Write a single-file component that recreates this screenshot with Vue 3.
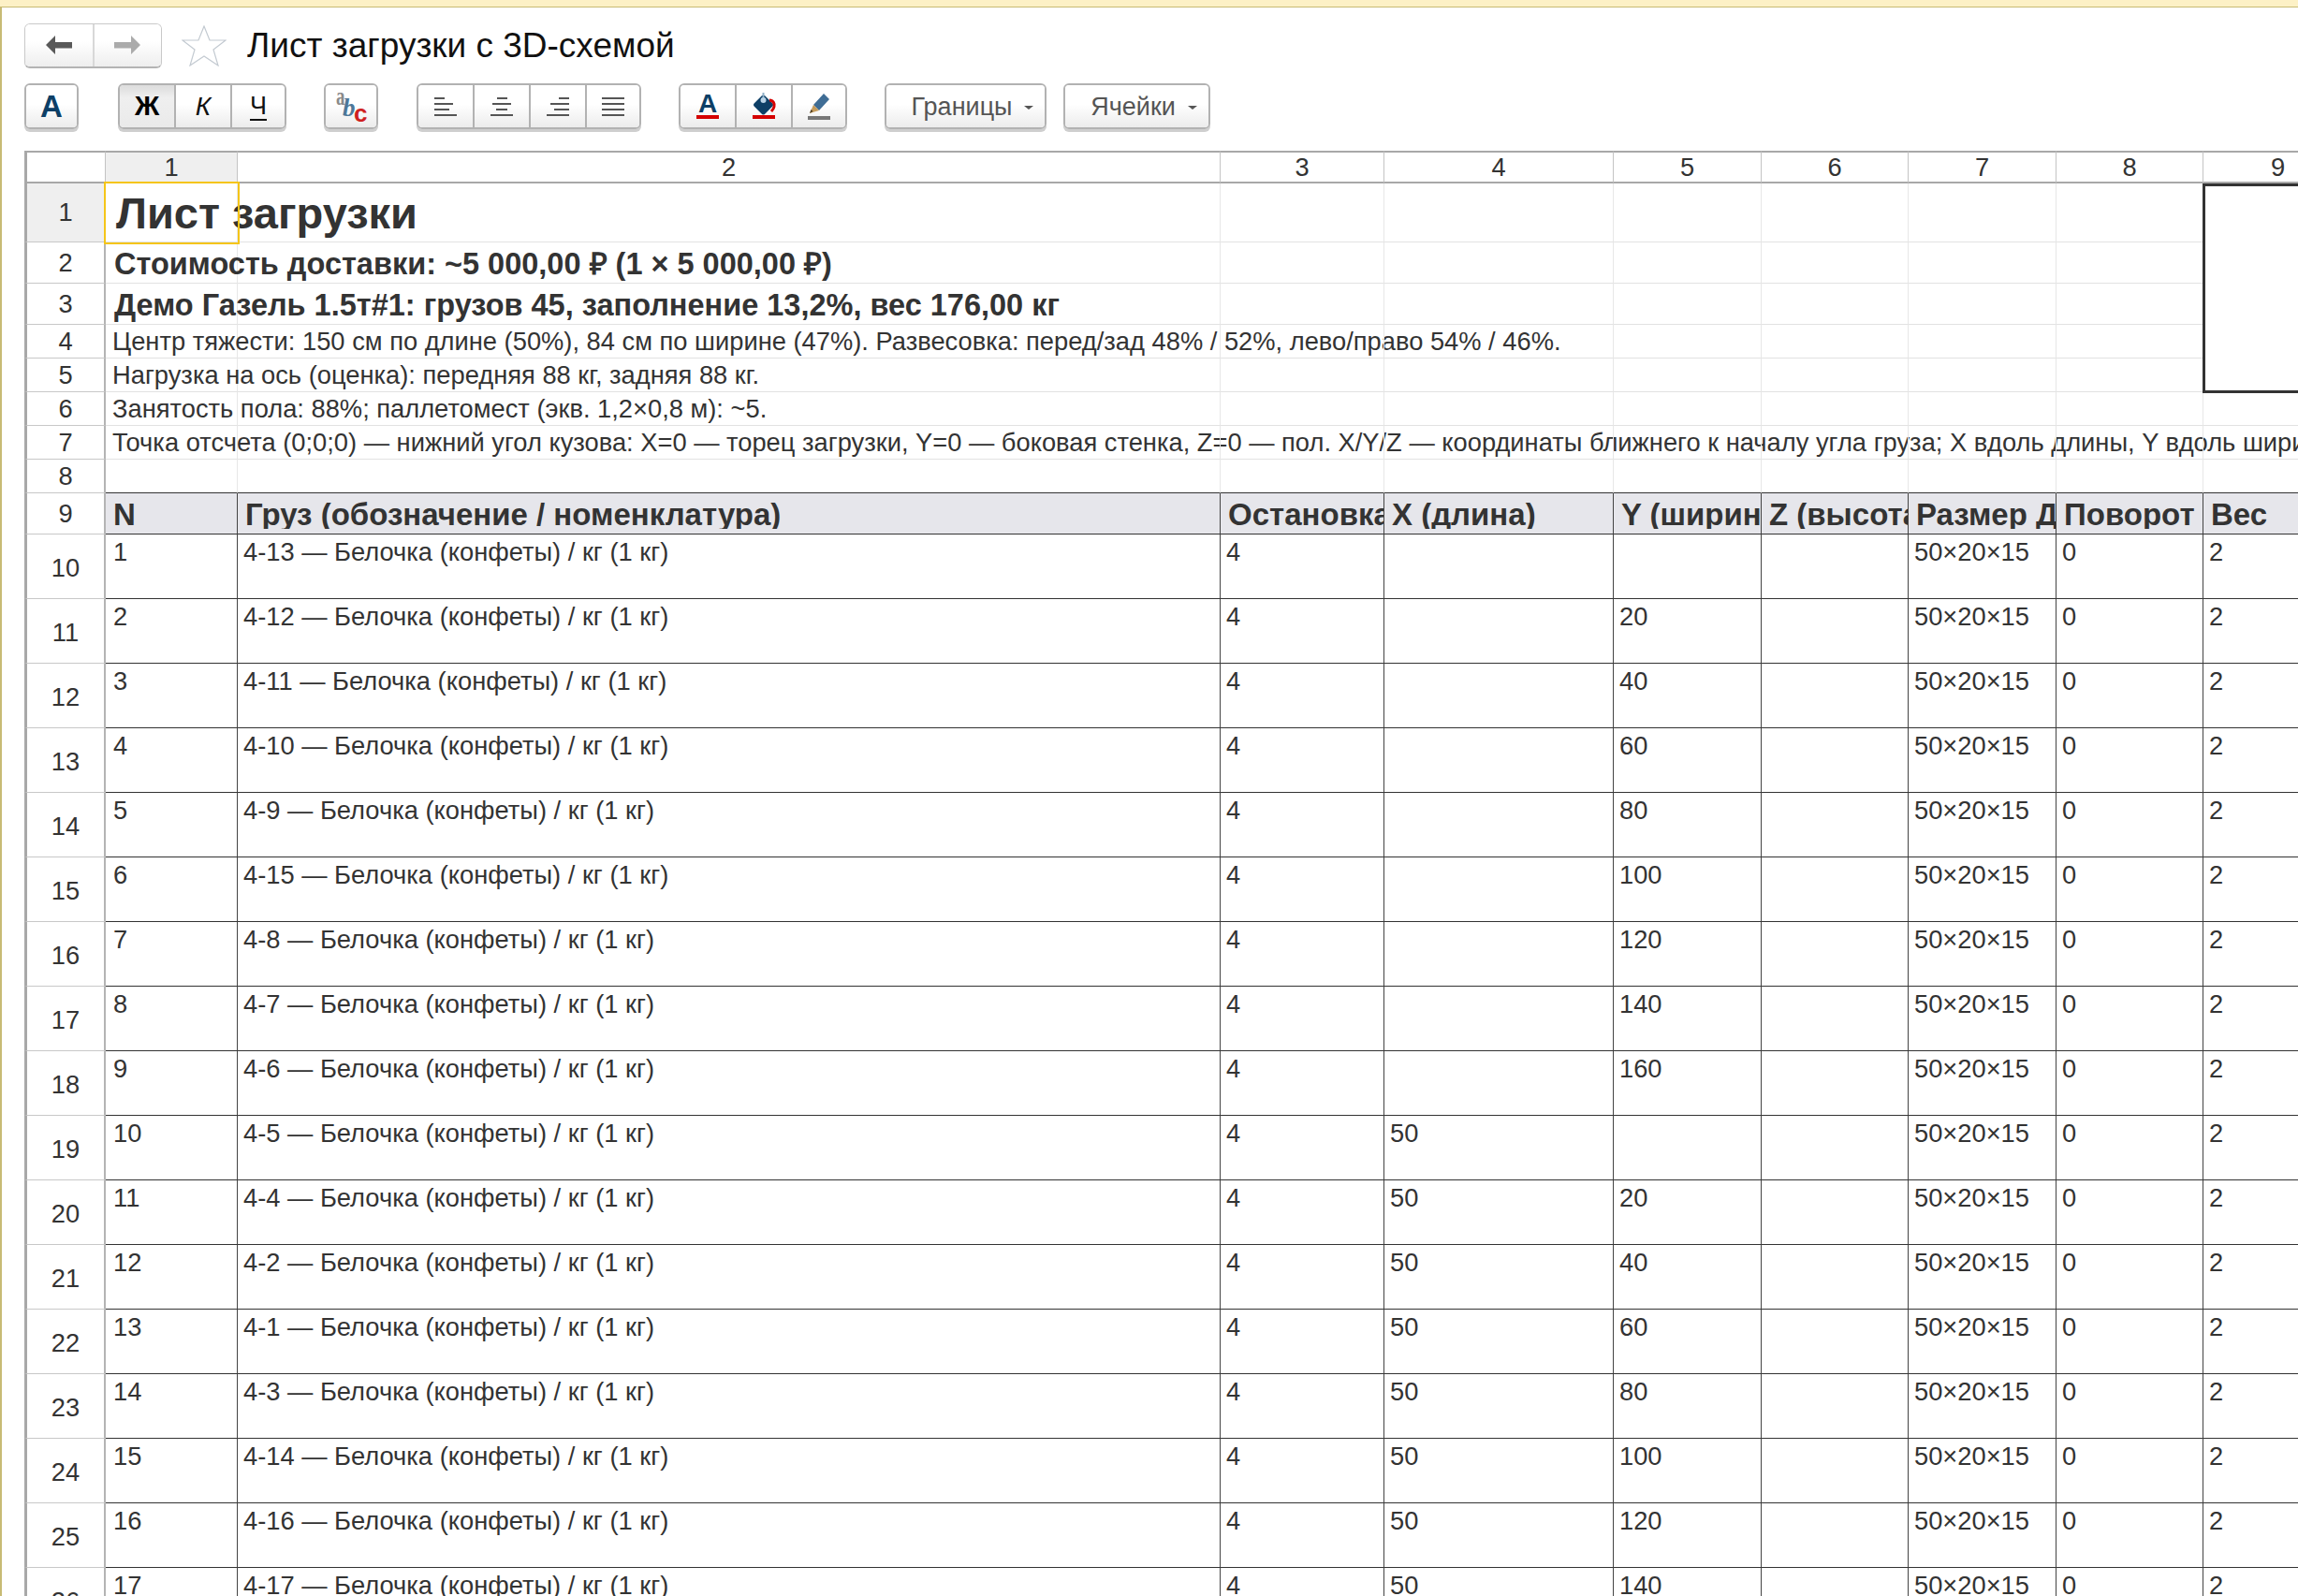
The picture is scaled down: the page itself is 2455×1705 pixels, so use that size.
<template>
  <div class="page">
    <div class="top-strip"></div>
    <div class="content">
      <div class="title-row">
        <div class="nav-group">
          <button class="nav-btn">
            <svg width="30" height="26" viewBox="0 0 30 26"><polygon points="1,13 11,3 11,10 29,10 29,16.500 11,16.500 11,23" fill="#595959" /></svg>
          </button>
          <button class="nav-btn">
            <svg width="30" height="26" viewBox="0 0 30 26"><polygon points="29,13 19,3 19,10 1,10 1,16.500 19,16.500 19,23" fill="#ababab" /></svg>
          </button>
        </div>
        <svg class="star" width="48" height="44" viewBox="0 0 48 44">
          <polygon points="24,1 30,16 47,16 34,26 39,43 24,33 9,43 14,26 1,16 18,16" fill="#fff" stroke="#c3cad1" stroke-width="1.200" />
        </svg>
        <h1 class="title">Лист загрузки с 3D-схемой</h1>
      </div>

      <div class="toolbar">
        <div class="btn-group"><button class="btn icon-btn font-a">A</button></div>
        <div class="btn-group group-b">
          <button class="btn icon-btn pressed bold-btn">Ж</button>
          <button class="btn icon-btn italic-btn">К</button>
          <button class="btn icon-btn under-btn"><span>Ч</span></button>
        </div>
        <div class="btn-group group-c">
          <button class="btn icon-btn">
            <svg width="40" height="40" viewBox="0 0 40 40">
              <text transform="translate(4 18) scale(0.7 1)" class="abc-a">a</text>
              <text x="11" y="30" class="abc-b">b</text>
              <text x="23" y="36" class="abc-c">c</text>
            </svg>
          </button>
        </div>
        <div class="btn-group group-d">
          <button v-for="(lines, i) in alignIcons" :key="i" class="btn icon-btn">
            <svg width="24" height="20" viewBox="0 0 24 20">
              <rect v-for="(l, j) in lines" :key="j" :x="l[0]" :y="j * 6" :width="l[1]" height="2" fill="#555" />
            </svg>
          </button>
        </div>
        <div class="btn-group group-e">
          <button class="btn icon-btn">
            <svg width="30" height="30" viewBox="0 0 30 30">
              <text x="15" y="21" text-anchor="middle" class="color-a">A</text>
              <rect x="3" y="24" width="24" height="4" fill="#d40000" />
            </svg>
          </button>
          <button class="btn icon-btn">
            <svg width="30" height="30" viewBox="0 0 30 30">
              <rect x="6.500" y="5" width="16" height="16" rx="2" transform="rotate(45 14.500 13)" fill="#0d3f66" />
              <path d="M21 8 C25 8 27 12 26 15 C25.500 17 25 18 23 20" fill="none" stroke="#d40000" stroke-width="3" />
              <rect x="13.500" y="0" width="2" height="7" fill="#8fb0c8" />
              <circle cx="14.500" cy="8" r="3" fill="#b9d3e6" />
              <rect x="3" y="24" width="24" height="4" fill="#d40000" />
            </svg>
          </button>
          <button class="btn icon-btn">
            <svg width="30" height="30" viewBox="0 0 30 30">
              <polygon points="9,13 20,1 26,7 15,19" fill="#3f6d95" />
              <polygon points="9,13 15,19 5,22" fill="#c69c5c" />
              <polygon points="6.500,18 8.500,20 5,22" fill="#4a3b22" />
              <rect x="3" y="25" width="24" height="4" fill="#777" />
            </svg>
          </button>
        </div>
        <div class="btn-group group-f">
          <button class="btn text-btn borders-btn">Границы<i class="caret"></i></button>
        </div>
        <div class="btn-group group-g">
          <button class="btn text-btn cells-btn">Ячейки<i class="caret"></i></button>
        </div>
      </div>

      <table class="sheet">
        <colgroup>
          <col v-for="(w, i) in colWidths" :key="i" :style="{ width: w + 'px' }" />
        </colgroup>
        <thead>
          <tr class="col-heads">
            <th class="corner"></th>
            <th v-for="n in 9" :key="n" :class="{ 'head-active': n === 1 }">{{ n }}</th>
          </tr>
        </thead>
        <tbody>
          <tr v-for="(row, i) in topRows" :key="i" :class="row.cls">
            <th class="row-head" :class="{ 'head-active': i === 0 }">{{ i + 1 }}</th>
            <td class="free first">
              <span :class="row.textCls">{{ row.text }}</span>
              <div v-if="i === 0" class="selection"></div>
            </td>
            <td v-for="n in 8" :key="n" class="free">
              <div v-if="i === 0 && n === 8" class="picture-frame"></div>
            </td>
          </tr>
          <tr class="r-head">
            <th class="row-head">9</th>
            <td v-for="h in tableHead" :key="h" class="tbl-head"><div class="clip">{{ h }}</div></td>
          </tr>
          <tr v-for="(item, i) in items" :key="item[0]" class="r-data">
            <th class="row-head">{{ i + 10 }}</th>
            <td class="num">{{ i + 1 }}</td>
            <td>{{ item[0] }} — Белочка (конфеты) / кг (1 кг)</td>
            <td>4</td>
            <td>{{ item[1] }}</td>
            <td>{{ item[2] }}</td>
            <td></td>
            <td>50×20×15</td>
            <td>0</td>
            <td>2</td>
          </tr>
        </tbody>
      </table>
    </div>
  </div>
</template>

<script setup>
const colWidths = [87, 141, 1050, 175, 245, 158, 157, 158, 157, 160];

const alignIcons = [
  [[0, 11], [0, 20], [0, 16], [0, 24]],
  [[7, 11], [2, 20], [6, 12], [0, 24]],
  [[13, 11], [4, 20], [8, 16], [0, 24]],
  [[0, 24], [0, 24], [0, 24], [0, 24]],
];

const topRows = [
  { cls: "r1", textCls: "t-title", text: "Лист загрузки" },
  { cls: "r2", textCls: "t-bold", text: "Стоимость доставки: ~5 000,00 ₽ (1 × 5 000,00 ₽)" },
  { cls: "r2", textCls: "t-bold", text: "Демо Газель 1.5т#1: грузов 45, заполнение 13,2%, вес 176,00 кг" },
  { cls: "r3", textCls: "t-plain", text: "Центр тяжести: 150 см по длине (50%), 84 см по ширине (47%). Развесовка: перед/зад 48% / 52%, лево/право 54% / 46%." },
  { cls: "r3", textCls: "t-plain", text: "Нагрузка на ось (оценка): передняя 88 кг, задняя 88 кг." },
  { cls: "r3", textCls: "t-plain", text: "Занятость пола: 88%; паллетомест (экв. 1,2×0,8 м): ~5." },
  { cls: "r3", textCls: "t-plain", text: "Точка отсчета (0;0;0) — нижний угол кузова: X=0 — торец загрузки, Y=0 — боковая стенка, Z=0 — пол. X/Y/Z — координаты ближнего к началу угла груза; X вдоль длины, Y вдоль ширины, Z вверх." },
  { cls: "r3 r-last", textCls: "t-plain", text: "" },
];

const tableHead = [
  "N",
  "Груз (обозначение / номенклатура)",
  "Остановка",
  "X (длина)",
  "Y (ширина)",
  "Z (высота)",
  "Размер Д×Ш×В",
  "Поворот",
  "Вес",
];

const items = [
  ["4-13", "", ""],
  ["4-12", "", "20"],
  ["4-11", "", "40"],
  ["4-10", "", "60"],
  ["4-9", "", "80"],
  ["4-15", "", "100"],
  ["4-8", "", "120"],
  ["4-7", "", "140"],
  ["4-6", "", "160"],
  ["4-5", "50", ""],
  ["4-4", "50", "20"],
  ["4-2", "50", "40"],
  ["4-1", "50", "60"],
  ["4-3", "50", "80"],
  ["4-14", "50", "100"],
  ["4-16", "50", "120"],
  ["4-17", "50", "140"],
];
</script>

<style>
html,
body {
  margin: 0;
  background: #fff;
}
</style>

<style scoped>
* {
  box-sizing: border-box;
}

.page {
  width: 2455px;
  height: 1705px;
  overflow: hidden;
  display: flex;
  flex-direction: column;
  background: #fff;
  font-family: "Liberation Sans", Arial, sans-serif;
  color: #333;
}

.top-strip {
  flex: none;
  height: 8px;
  background: #fdf1c6;
  border-bottom: 1px solid #c8bb74;
}

.content {
  flex: 1;
  min-height: 0;
  border-left: 2px solid #c8bb74;
  padding: 16px 0 0 24px;
}

.title-row {
  display: flex;
  align-items: center;
  height: 49px;
}

.nav-group {
  display: flex;
  width: 147px;
  height: 48px;
  border: 1px solid #c9c9c9;
  border-bottom: 2px solid #b4b4b4;
  border-radius: 6px;
  overflow: hidden;
}

.nav-btn {
  flex: 1;
  display: flex;
  align-items: center;
  justify-content: center;
  padding: 0;
  border: 0;
  background: linear-gradient(#fff 40%, #eee);
}

.nav-btn + .nav-btn {
  border-left: 2px solid #d8d8d8;
}

.star {
  margin-left: 21px;
}

.title {
  margin: 1px 0 0 22px;
  font-size: 37px;
  font-weight: 400;
  color: #111;
}

.toolbar {
  display: flex;
  align-items: flex-start;
  margin-top: 16px;
  height: 52px;
}

.btn-group {
  display: flex;
  height: 49px;
  border: 2px solid #b2b2b2;
  border-radius: 6px;
  box-shadow: 0 3px 0 #cfcfcf;
  overflow: hidden;
}

.group-b {
  margin-left: 42px;
}

.group-c {
  margin-left: 40px;
}

.group-d {
  margin-left: 41px;
}

.group-e {
  margin-left: 40px;
}

.group-f {
  margin-left: 40px;
}

.group-g {
  margin-left: 18px;
}

.btn {
  display: flex;
  align-items: center;
  justify-content: center;
  padding: 0;
  border: 0;
  background: linear-gradient(#fff 45%, #ececec);
  font-family: inherit;
  color: #555;
}

.icon-btn {
  width: 58px;
}

.icon-btn + .icon-btn {
  width: 60px;
  border-left: 2px solid #b2b2b2;
}

.icon-btn + .icon-btn:last-child {
  width: 58px;
}

.icon-btn:only-child {
  width: 54px;
}

.font-a {
  font-size: 33px;
  font-weight: 700;
  color: #0d3f66;
}

.pressed {
  background: linear-gradient(#dcdcdc, #efefef 30%, #eaeaea);
}

.bold-btn {
  font-size: 29px;
  font-weight: 700;
  color: #000;
}

.italic-btn {
  font-size: 28px;
  font-style: italic;
  color: #111;
}

.under-btn span {
  font-size: 27px;
  color: #111;
  text-decoration: underline;
  text-underline-offset: 5px;
  text-decoration-thickness: 2px;
}

.abc-a {
  font-family: "Liberation Serif", serif;
  font-size: 27px;
  font-weight: 700;
  fill: #8a8a8a;
}

.abc-b {
  font-family: "Liberation Serif", serif;
  font-size: 27px;
  font-weight: 700;
  font-style: italic;
  fill: #4d7899;
}

.abc-c {
  font-family: "Liberation Sans", sans-serif;
  font-size: 26px;
  font-weight: 700;
  fill: #cf2020;
}

.color-a {
  font-size: 28px;
  font-weight: 700;
  fill: #0d3f66;
}

.text-btn {
  height: 100%;
  padding-top: 2px;
  font-size: 27px;
  position: relative;
}

.borders-btn {
  width: 169px;
  padding-right: 8px;
}

.cells-btn {
  width: 153px;
  padding-right: 8px;
}

.caret {
  position: absolute;
  right: 12px;
  top: 22px;
  border-left: 5px solid transparent;
  border-right: 5px solid transparent;
  border-top: 4px solid #555;
}

.sheet {
  table-layout: fixed;
  border-collapse: separate;
  border-spacing: 0;
  width: 2488px;
  margin-top: 20px;
  font-size: 27.300px;
  line-height: 30px;
}

.sheet th,
.sheet td {
  padding: 0;
  font-weight: 400;
  white-space: nowrap;
}

.col-heads th {
  height: 35px;
  border-top: 2px solid #a8a8a8;
  border-bottom: 2px solid #a8a8a8;
  border-right: 1px solid #c4c4c4;
  text-align: center;
  vertical-align: middle;
}

.col-heads .corner {
  border-left: 3px solid #a8a8a8;
  border-right: 1px solid #c4c4c4;
}

.head-active {
  background: #efefef;
}

.row-head {
  border-left: 3px solid #a8a8a8;
  border-right: 2px solid #b4b4b4;
  border-bottom: 1px solid #c8c8c8;
  text-align: center;
  vertical-align: middle;
}

.r1 td,
.r1 th {
  height: 63px;
}

.r2 td,
.r2 th {
  height: 44px;
}

.r3 td,
.r3 th {
  height: 36px;
}

.r-head td,
.r-head th {
  height: 44px;
}

.r-data td,
.r-data th {
  height: 69px;
}

.free {
  border-right: 1px solid #e7e7e7;
  border-bottom: 1px solid #e2e2e2;
  vertical-align: middle;
  position: relative;
}

.first {
  padding-left: 7px !important;
}

.t-title {
  display: block;
  margin-left: 4px;
  padding-top: 2px;
  font-size: 47px;
  line-height: 50px;
  font-weight: 700;
}

.t-bold {
  display: block;
  margin-left: 2px;
  padding-top: 2px;
  font-size: 32.500px;
  font-weight: 700;
}

.t-plain {
  display: block;
  padding-top: 1px;
  font-size: 27.300px;
}

.r-last td {
  border-bottom: 1px solid #333;
}

.r-last th {
  border-bottom: 1px solid #c8c8c8;
}

.selection {
  position: absolute;
  z-index: 2;
  left: -2px;
  top: -2px;
  right: -3px;
  bottom: -3px;
  border: 2px solid #f5c518;
}

.picture-frame {
  position: absolute;
  z-index: 2;
  left: -1px;
  top: 0;
  width: 200px;
  height: 224px;
  background: #fff;
  border: 3px solid #333;
}

.tbl-head {
  background: #e6e6eb;
  border-right: 1px solid #444;
  border-bottom: 1px solid #333;
  vertical-align: middle;
  font-size: 33px;
  font-weight: 700;
}

.clip {
  overflow: hidden;
  padding: 2px 0 0 8px;
  font-weight: 700;
}

.r-data td {
  padding: 4px 0 0 6px;
  border-right: 1px solid #444;
  border-bottom: 1px solid #333;
  vertical-align: top;
}

.r-data td.num {
  padding-left: 8px;
}

.r-data .row-head {
  padding-top: 4px;
}
</style>
